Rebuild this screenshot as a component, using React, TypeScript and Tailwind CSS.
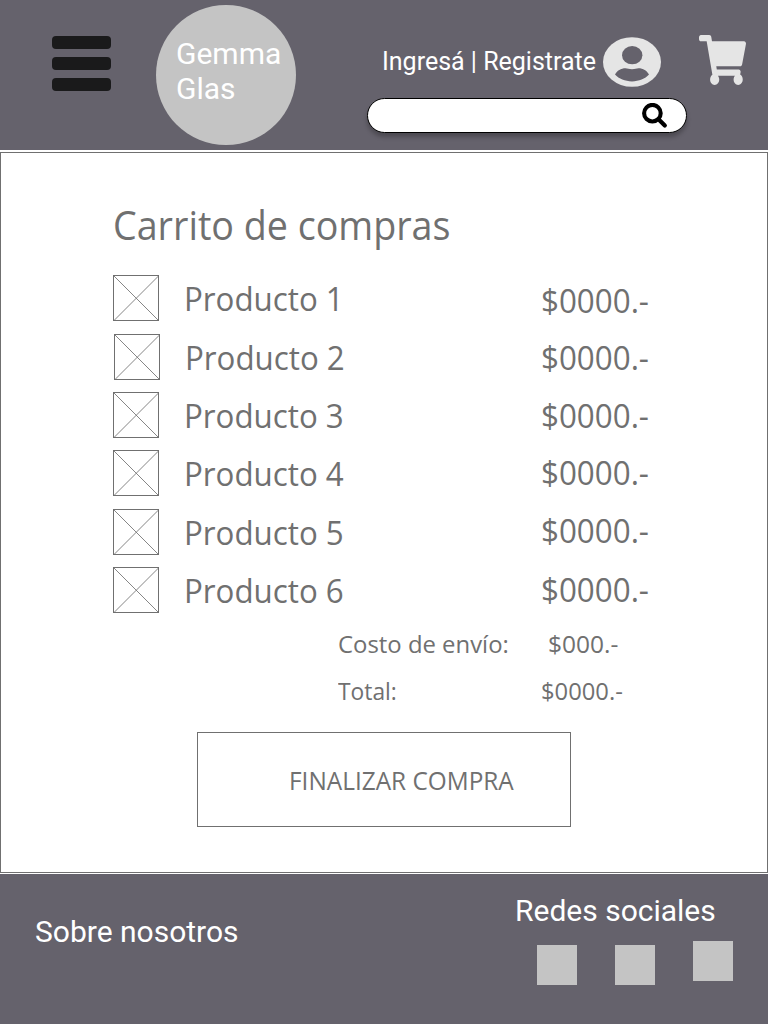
import { FaShoppingCart } from "react-icons/fa";

const products = [
  { name: "Producto 1", row: "mt-0", price: "mt-0" },
  { name: "Producto 2", row: "mt-[13px] ml-px", price: "mt-[11px]" },
  { name: "Producto 3", row: "mt-3", price: "mt-3" },
  { name: "Producto 4", row: "mt-3", price: "mt-[11px]" },
  { name: "Producto 5", row: "mt-[13px]", price: "mt-3" },
  { name: "Producto 6", row: "mt-3", price: "mt-[13px]" },
];

function Placeholder() {
  return (
    <svg width="46" height="46" viewBox="0 0 46 46" className="shrink-0" fill="none" stroke="#707070">
      <rect x="0.5" y="0.5" width="45" height="45" />
      <path d="M0.5 0.5L46 46M46 0.5L0.5 46" strokeWidth="0.85" />
    </svg>
  );
}

function UserIcon() {
  return (
    <svg width="58" height="50" viewBox="0 0 58 50" className="shrink-0">
      <ellipse cx="29" cy="25" rx="29" ry="24.8" fill="#e5e5e5" />
      <ellipse cx="29.2" cy="18.2" rx="10.2" ry="9.1" fill="#65626c" />
      <path
        d="M12 37.6C14 33.6 18 31.3 22.5 31.3C24.5 31.3 26 32.2 29 32.2C32 32.2 33.5 31.3 35.5 31.3C40 31.3 44 33.6 46 37.6C42 42 36 44.4 29 44.4C22 44.4 16 42 12 37.6Z"
        fill="#65626c"
      />
    </svg>
  );
}

function SearchIcon() {
  return (
    <svg width="26" height="26" viewBox="0 0 26 26" fill="none" stroke="black">
      <circle cx="10.4" cy="10.2" r="8.3" strokeWidth="4.1" />
      <path d="M16.5 16.3L22.8 22.6" strokeWidth="4.2" strokeLinecap="round" />
    </svg>
  );
}

function Header() {
  return (
    <header className="flex h-[150px] bg-[#65626c] text-white">
      <button className="mt-9 ml-[52px] flex h-[55px] w-[59px] flex-col justify-between">
        <span className="h-[13px] w-full rounded-[4px] bg-[#1a1a1b]" />
        <span className="h-[13px] w-full rounded-[4px] bg-[#1a1a1b]" />
        <span className="h-[13px] w-full rounded-[4px] bg-[#1a1a1b]" />
      </button>
      <div className="mt-[5px] ml-[45px] h-[140px] w-[140px] rounded-full bg-[#c4c4c4] pt-[31px] pl-5 text-[30px] leading-[35px]">
        Gemma
        <br />
        Glas
      </div>
      <div className="ml-[71px] w-[320px] pt-9">
        <div className="flex h-[51px] items-center pl-[15px]">
          <span className="w-[221px] text-[25px] whitespace-nowrap">Ingresá | Registrate</span>
          <UserIcon />
        </div>
        <div className="mt-[11px] flex h-[35px] items-center justify-end rounded-full border border-black bg-white pr-[18px] shadow-[0_4px_4px_rgba(0,0,0,0.25)]">
          <SearchIcon />
        </div>
      </div>
      <FaShoppingCart preserveAspectRatio="none" className="mt-[35px] ml-3 h-[50px] w-[47px] text-[#e5e5e5]" />
    </header>
  );
}

export default function App() {
  return (
    <div className="flex h-[1024px] w-[768px] flex-col bg-white font-['Roboto',sans-serif]">
      <Header />
      <main className="mt-0.5 mb-px h-[721px] border border-[#707070] font-['Open_Sans','Noto_Sans',sans-serif] text-[#707070]">
        <h1 className="mt-[44px] ml-[112px] h-[56px] origin-left scale-x-[0.941] text-[40px] leading-[56px]">
          Carrito de compras
        </h1>
        <div className="mt-[22px] ml-[112px] flex h-[338px] text-[33px] leading-[48px] whitespace-nowrap">
          <ul className="w-[428px]">
            {products.map((p) => (
              <li key={p.name} className={"flex h-[46px] gap-[25px] " + p.row}>
                <Placeholder />
                <span className="origin-left scale-x-[0.948]">{p.name}</span>
              </li>
            ))}
          </ul>
          <ul className="pt-0.5">
            {products.map((p) => (
              <li key={p.name} className={"h-[46px] origin-left scale-x-[0.95] " + p.price}>
                $0000.-
              </li>
            ))}
          </ul>
        </div>
        <dl className="mt-[7px] ml-[337px] text-[24.5px] leading-[47px] whitespace-nowrap">
          <div className="flex h-[47px]">
            <dt className="w-[210px]">
              <span className="inline-block origin-left scale-x-[0.975]">Costo de envío:</span>
            </dt>
            <dd>$000.-</dd>
          </div>
          <div className="flex h-[47px]">
            <dt className="w-[203px]">
              <span className="inline-block origin-left scale-x-[0.93]">Total:</span>
            </dt>
            <dd className="origin-left scale-x-[0.97]">$0000.-</dd>
          </div>
        </dl>
        <button className="mt-[18px] ml-[196px] h-[95px] w-[374px] border border-[#707070] pt-[3px] pl-[91px] text-left text-[25px] whitespace-nowrap">
          <span className="inline-block origin-left scale-x-[0.975]">FINALIZAR COMPRA</span>
        </button>
      </main>
      <footer className="flex h-[150px] justify-between bg-[#65626c] text-[30px] leading-[35px] text-white">
        <a className="mt-10 ml-[35px]">Sobre nosotros</a>
        <div className="mt-[19px] mr-[35px] w-[218px]">
          <p>Redes sociales</p>
          <div className="mt-[13px] ml-[22px] flex justify-between">
            <span className="mt-1 h-10 w-10 bg-[#c4c4c4]" />
            <span className="mt-1 h-10 w-10 bg-[#c4c4c4]" />
            <span className="h-10 w-10 bg-[#c4c4c4]" />
          </div>
        </div>
      </footer>
    </div>
  );
}
